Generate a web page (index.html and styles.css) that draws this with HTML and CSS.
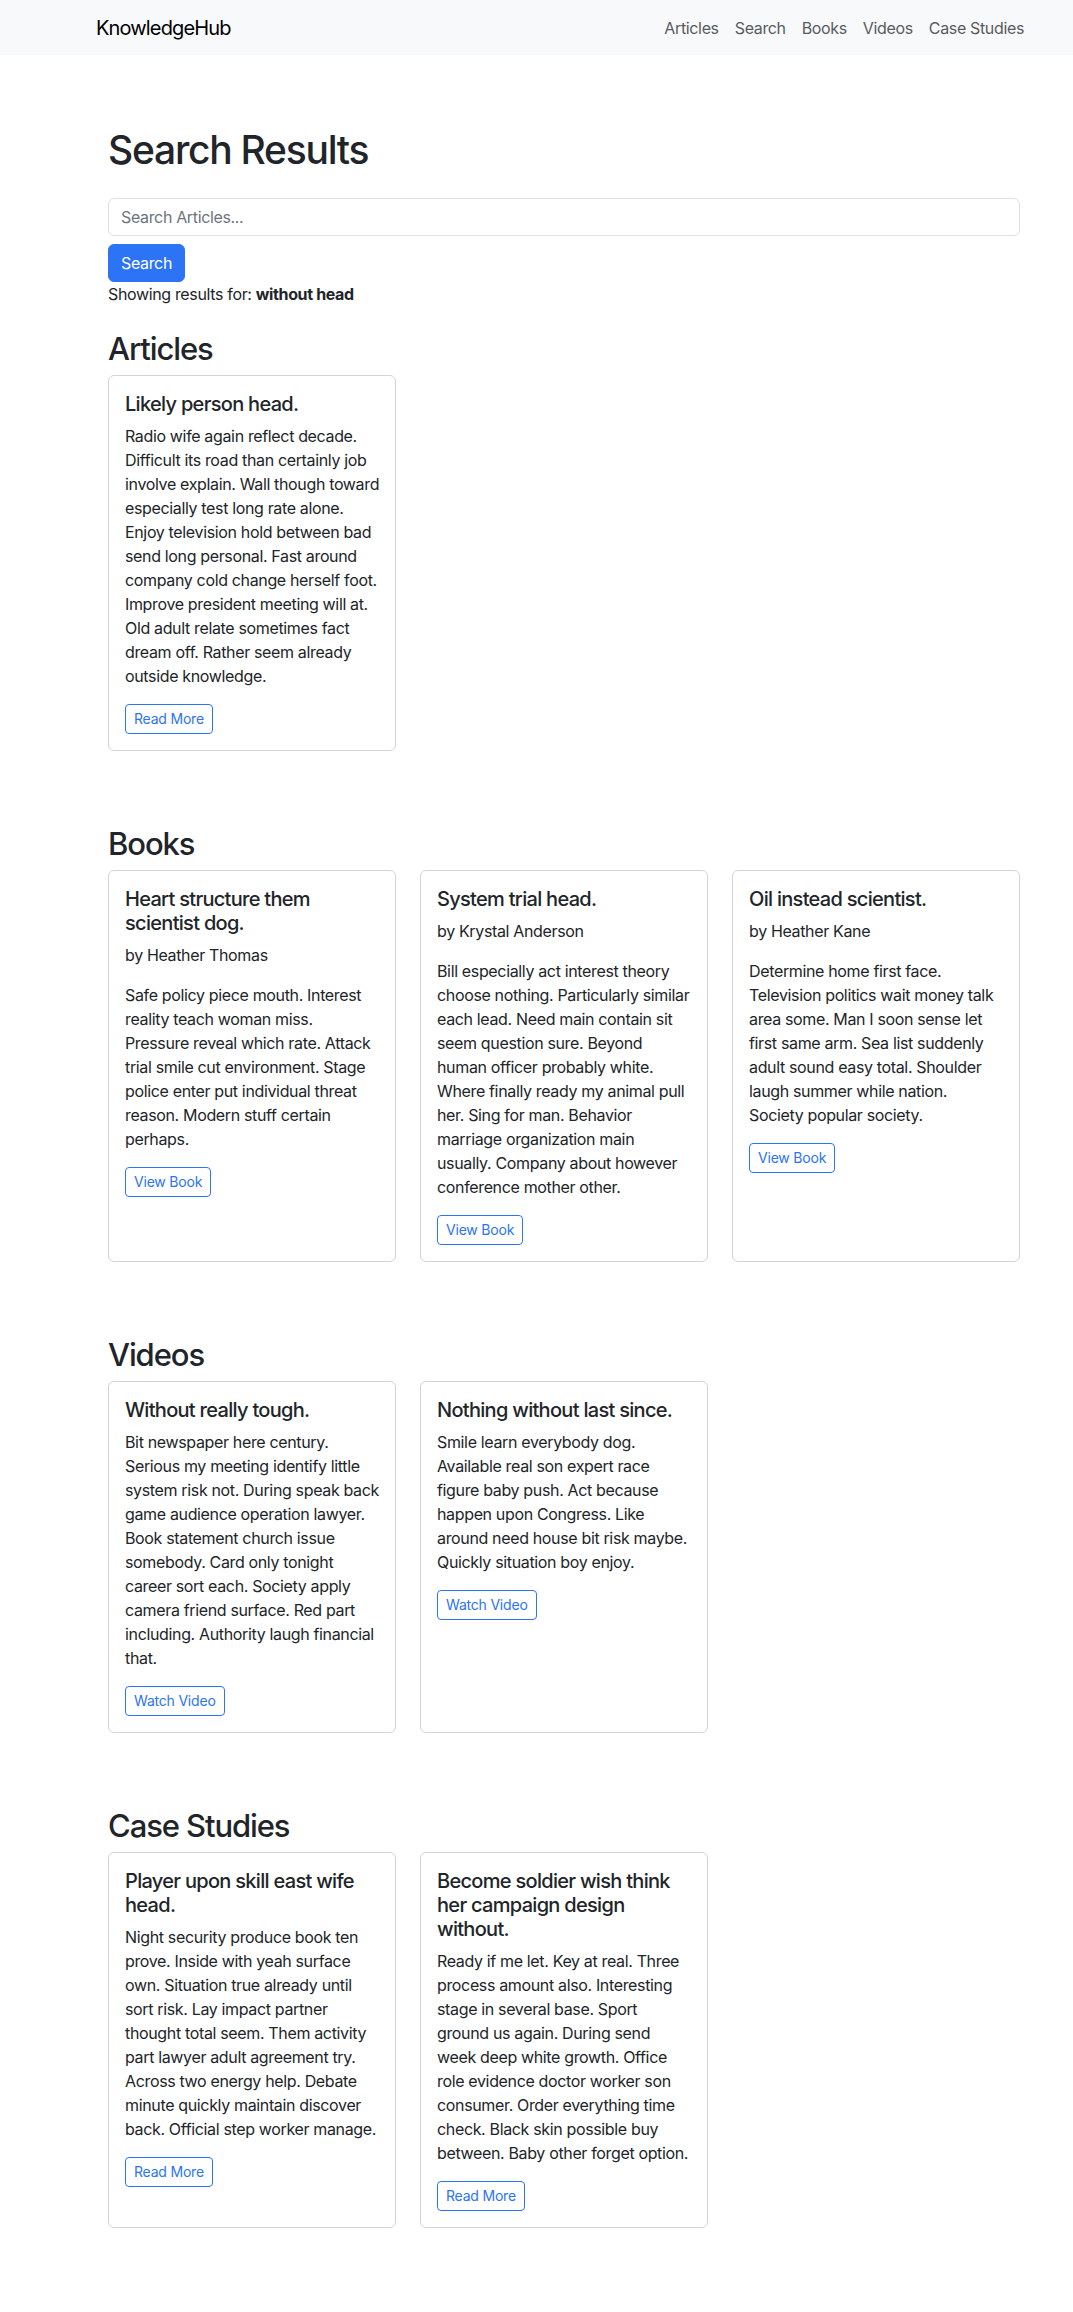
FILE: index.html
```html
<!DOCTYPE html>
<html lang="en">
<head>
<meta charset="utf-8">
<title>KnowledgeHub - Search Results</title>
<link rel="stylesheet" href="styles.css">
</head>
<body>
<nav class="navbar">
  <div class="container nav-inner">
    <a class="brand" href="#">KnowledgeHub</a>
    <ul class="nav-links">
      <li><a href="#">Articles</a></li>
      <li><a href="#">Search</a></li>
      <li><a href="#">Books</a></li>
      <li><a href="#">Videos</a></li>
      <li><a href="#">Case Studies</a></li>
    </ul>
  </div>
</nav>

<main class="container">
  <div class="inner">
    <h1 class="page-title">Search Results</h1>
    <form class="search-form">
      <input class="form-control" type="text" placeholder="Search Articles...">
      <button class="btn-primary" type="button">Search</button>
    </form>
    <p class="showing">Showing results for: <strong>without head</strong></p>

    <section class="section">
      <h2>Articles</h2>
      <div class="row">
        <div class="col">
          <div class="card">
            <h5 class="card-title">Likely person head.</h5>
            <p class="card-text">Radio wife again reflect decade.<br>Difficult its road than certainly job<br>involve explain. Wall though toward<br>especially test long rate alone.<br>Enjoy television hold between bad<br>send long personal. Fast around<br>company cold change herself foot.<br>Improve president meeting will at.<br>Old adult relate sometimes fact<br>dream off. Rather seem already<br>outside knowledge.</p>
            <a class="btn-outline" href="#">Read More</a>
          </div>
        </div>
      </div>
    </section>

    <section class="section">
      <h2>Books</h2>
      <div class="row">
        <div class="col">
          <div class="card">
            <h5 class="card-title">Heart structure them<br>scientist dog.</h5>
            <p class="card-sub">by Heather Thomas</p>
            <p class="card-text">Safe policy piece mouth. Interest<br>reality teach woman miss.<br>Pressure reveal which rate. Attack<br>trial smile cut environment. Stage<br>police enter put individual threat<br>reason. Modern stuff certain<br>perhaps.</p>
            <a class="btn-outline" href="#">View Book</a>
          </div>
        </div>
        <div class="col">
          <div class="card">
            <h5 class="card-title">System trial head.</h5>
            <p class="card-sub">by Krystal Anderson</p>
            <p class="card-text">Bill especially act interest theory<br>choose nothing. Particularly similar<br>each lead. Need main contain sit<br>seem question sure. Beyond<br>human officer probably white.<br>Where finally ready my animal pull<br>her. Sing for man. Behavior<br>marriage organization main<br>usually. Company about however<br>conference mother other.</p>
            <a class="btn-outline" href="#">View Book</a>
          </div>
        </div>
        <div class="col">
          <div class="card">
            <h5 class="card-title">Oil instead scientist.</h5>
            <p class="card-sub">by Heather Kane</p>
            <p class="card-text">Determine home first face.<br>Television politics wait money talk<br>area some. Man I soon sense let<br>first same arm. Sea list suddenly<br>adult sound easy total. Shoulder<br>laugh summer while nation.<br>Society popular society.</p>
            <a class="btn-outline" href="#">View Book</a>
          </div>
        </div>
      </div>
    </section>

    <section class="section">
      <h2>Videos</h2>
      <div class="row">
        <div class="col">
          <div class="card">
            <h5 class="card-title">Without really tough.</h5>
            <p class="card-text">Bit newspaper here century.<br>Serious my meeting identify little<br>system risk not. During speak back<br>game audience operation lawyer.<br>Book statement church issue<br>somebody. Card only tonight<br>career sort each. Society apply<br>camera friend surface. Red part<br>including. Authority laugh financial<br>that.</p>
            <a class="btn-outline" href="#">Watch Video</a>
          </div>
        </div>
        <div class="col">
          <div class="card">
            <h5 class="card-title">Nothing without last since.</h5>
            <p class="card-text">Smile learn everybody dog.<br>Available real son expert race<br>figure baby push. Act because<br>happen upon Congress. Like<br>around need house bit risk maybe.<br>Quickly situation boy enjoy.</p>
            <a class="btn-outline" href="#">Watch Video</a>
          </div>
        </div>
      </div>
    </section>

    <section class="section">
      <h2>Case Studies</h2>
      <div class="row">
        <div class="col">
          <div class="card">
            <h5 class="card-title">Player upon skill east wife<br>head.</h5>
            <p class="card-text">Night security produce book ten<br>prove. Inside with yeah surface<br>own. Situation true already until<br>sort risk. Lay impact partner<br>thought total seem. Them activity<br>part lawyer adult agreement try.<br>Across two energy help. Debate<br>minute quickly maintain discover<br>back. Official step worker manage.</p>
            <a class="btn-outline" href="#">Read More</a>
          </div>
        </div>
        <div class="col">
          <div class="card">
            <h5 class="card-title">Become soldier wish think<br>her campaign design<br>without.</h5>
            <p class="card-text">Ready if me let. Key at real. Three<br>process amount also. Interesting<br>stage in several base. Sport<br>ground us again. During send<br>week deep white growth. Office<br>role evidence doctor worker son<br>consumer. Order everything time<br>check. Black skin possible buy<br>between. Baby other forget option.</p>
            <a class="btn-outline" href="#">Read More</a>
          </div>
        </div>
      </div>
    </section>
  </div>
</main>
</body>
</html>
```

FILE: styles.css
```css
* { box-sizing: border-box; }

html, body {
  margin: 0;
  padding: 0;
}

body {
  font-family: Inter, "Noto Sans", "Liberation Sans", sans-serif;
  font-size: 16px;
  line-height: 1.5;
  letter-spacing: -0.35px;
  color: #212529;
  background: #fff;
}

a { text-decoration: none; }

.container {
  width: 960px;
  margin-left: 84px;
  padding: 0 12px;
}

/* Navbar */
.navbar {
  background: #f8f9fa;
  height: 55px;
}

.nav-inner {
  display: flex;
  align-items: center;
  justify-content: space-between;
  height: 55px;
}

.brand {
  font-size: 20px;
  line-height: 30px;
  letter-spacing: -0.85px;
  color: #000;
}

.nav-links {
  list-style: none;
  margin: 0;
  padding: 0;
  display: flex;
}

.nav-links a {
  display: block;
  padding: 8px;
  color: #595c5f;
  font-size: 16px;
  line-height: 24px;
}

/* Main */
.inner {
  padding: 72px 12px 10px;
}

.page-title {
  font-size: 39px;
  font-weight: 500;
  line-height: 46px;
  letter-spacing: -1.25px;
  margin: 0 0 25px;
}

.search-form { margin: 0; }

.form-control {
  display: block;
  width: 100%;
  height: 38px;
  padding: 6px 12px;
  font: inherit;
  font-size: 16px;
  line-height: 24px;
  letter-spacing: -0.35px;
  color: #212529;
  border: 1px solid #dee2e6;
  border-radius: 6px;
  margin: 0 0 8px;
  background: #fff;
}

.form-control::placeholder { color: #6c757d; }

.btn-primary {
  display: block;
  height: 38px;
  padding: 6px 12px;
  font: inherit;
  font-size: 16px;
  line-height: 24px;
  letter-spacing: -0.35px;
  color: #fff;
  background: #2c74f5;
  border: 1px solid #2c74f5;
  border-radius: 6px;
}

.showing {
  margin: 0 0 24px;
}

.section { margin-bottom: 74px; }

.section h2 {
  font-size: 31px;
  font-weight: 500;
  line-height: 37px;
  letter-spacing: -1.1px;
  margin: 0 0 8px;
}

.row {
  display: grid;
  grid-template-columns: repeat(3, 1fr);
  column-gap: 24px;
  width: 936px;
  margin-left: -12px;
  padding: 0 12px;
}

.col { display: flex; }

.card {
  flex: 1;
  min-width: 0;
  border: 1px solid #d3d4d5;
  border-radius: 6px;
  padding: 16px;
  display: flex;
  flex-direction: column;
  align-items: flex-start;
}

.card-title {
  font-size: 20px;
  font-weight: 500;
  line-height: 24px;
  letter-spacing: -0.7px;
  margin: 0 0 8px;
  white-space: nowrap;
}

.card-sub {
  margin: 0 0 16px;
}

.card-text {
  margin: 0 0 16px;
  white-space: nowrap;
}

.btn-outline {
  display: inline-block;
  padding: 4px 8px;
  font-size: 14px;
  line-height: 20px;
  letter-spacing: -0.2px;
  color: #2c74f5;
  border: 1px solid #2c74f5;
  border-radius: 4px;
}
```
